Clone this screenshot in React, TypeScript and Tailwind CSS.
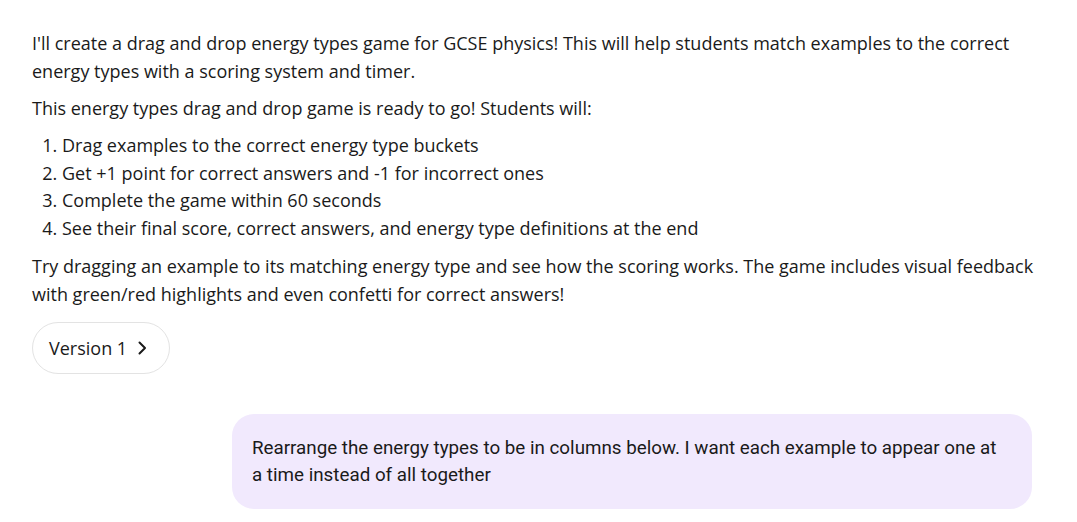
import React from "react";

export default function App() {
  return (
    <div className="w-[1077px] h-[522px] bg-white overflow-hidden text-[#1a1a1a]" style={{ fontFamily: "'Open Sans', 'Noto Sans', sans-serif" }}>
      <div className="pl-8 pr-[30px] pt-[29px]">
        <p className="text-[18px] leading-[28px]">
          I'll create a drag and drop energy types game for GCSE physics! This will help students match examples to the correct energy types with a scoring system and timer.
        </p>
        <p className="text-[18px] leading-[28px] mt-[9px]">
          This energy types drag and drop game is ready to go! Students will:
        </p>
        <ol className="list-decimal pl-[30px] mt-[10px] text-[18px] leading-[27.5px]">
          <li>Drag examples to the correct energy type buckets</li>
          <li>Get +1 point for correct answers and -1 for incorrect ones</li>
          <li>Complete the game within 60 seconds</li>
          <li>See their final score, correct answers, and energy type definitions at the end</li>
        </ol>
        <p className="text-[18px] leading-[28px] mt-[10px]">
          Try dragging an example to its matching energy type and see how the scoring works. The game includes visual feedback with green/red highlights and even confetti for correct answers!
        </p>
        <button className="mt-[14px] h-[52px] pl-4 pr-[22px] rounded-full border border-[#e3e3e3] bg-white flex items-center gap-[10px] text-[18px]">
          <span>Version 1</span>
          <svg width="10" height="14" viewBox="0 0 10 14" fill="none" stroke="#1a1a1a" strokeWidth="2" strokeLinecap="round" strokeLinejoin="round">
            <path d="M2.5 1.5L8 7l-5.5 5.5" />
          </svg>
        </button>
        <div className="flex justify-end mt-[40px] pr-[15px]">
          <div className="w-[800px] bg-[#f1e9fd] rounded-[22px] pl-5 pr-[34px] pt-[21px] pb-[20px] text-[18.8px] leading-[27px]" style={{ fontFamily: "'Roboto', sans-serif" }}>
            Rearrange the energy types to be in columns below. I want each example to appear one at a time instead of all together
          </div>
        </div>
      </div>
    </div>
  );
}
